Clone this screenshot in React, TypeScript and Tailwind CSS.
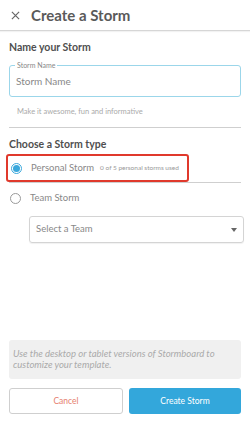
const Radio = ({ checked }: { checked?: boolean }) =>
  checked ? (
    <span className="flex h-[11px] w-[11px] shrink-0 items-center justify-center rounded-full border border-[#3aa8dc]">
      <span className="block h-[7px] w-[7px] rounded-full bg-[#3aa8dc]" />
    </span>
  ) : (
    <span className="block h-[11px] w-[11px] shrink-0 rounded-full border border-[#9a9a9a]" />
  );

const App = () => {
  return (
    <div className="flex h-[431px] w-[250px] flex-col bg-white font-['Lato',sans-serif] text-[#555]">
      {/* header */}
      <div className="flex h-[31px] shrink-0 items-center border-b border-[#d6d6d6] shadow-[0_1px_1px_rgba(0,0,0,0.05)]">
        <svg className="ml-[11px] h-[9px] w-[9px]" viewBox="0 0 10 10" fill="none" stroke="#666" strokeWidth="1.3">
          <path d="M1 1l8 8M9 1l-8 8" />
        </svg>
        <span className="ml-[11px] text-[15px] font-bold text-[#5a5a5a]">Create a Storm</span>
      </div>

      <div className="flex flex-1 flex-col px-[9px]">
        <p className="mt-[10px] text-[10.5px] font-bold leading-[12px] text-[#4f4f4f]">Name your Storm</p>

        {/* input */}
        <div className="relative mt-[12px] h-[32px] rounded-[3px] border border-[#9bd6ea]">
          <span className="absolute -top-[5px] left-[5px] bg-white px-[2px] text-[7px] leading-[8px] text-[#888]">Storm Name</span>
          <span className="absolute left-[6px] top-[9px] text-[10px] leading-[12px] text-[#888]">Storm Name</span>
        </div>
        <p className="ml-[8px] mt-[10px] text-[7.5px] leading-[9px] text-[#aaa]">Make it awesome, fun and informative</p>
        <div className="mt-[11px] border-t border-[#cfcfcf]" />

        <p className="mt-[10px] text-[10.5px] font-bold leading-[12px] text-[#4f4f4f]">Choose a Storm type</p>

        {/* personal storm */}
        <div className="mt-[4px] flex h-[28px] w-[183px] -ml-[3px] items-center rounded-[3px] border-2 border-[#e0392c]">
          <span className="ml-[3px]"><Radio checked /></span>
          <span className="ml-[9px] text-[9.5px] text-[#888]">Personal Storm</span>
          <span className="ml-[6px] text-[6.5px] text-[#999]">0 of 5 personal storms used</span>
        </div>
        <div className="border-t border-[#cfcfcf]" />

        {/* team storm */}
        <div className="mt-[10px] flex h-[11px] items-center">
          <span className="ml-[1px]"><Radio /></span>
          <span className="ml-[9px] text-[9.5px] text-[#888]">Team Storm</span>
        </div>
        <div className="ml-[20px] mr-[-3px] mt-[12px] flex h-[27px] items-center justify-between rounded-[3px] border border-[#d4d4d4] px-[6px] shadow-[0_1px_1px_rgba(0,0,0,0.06)]">
          <span className="text-[9.5px] text-[#888]">Select a Team</span>
          <svg className="h-[4px] w-[6px]" viewBox="0 0 6 4" fill="#666">
            <path d="M0 0h6L3 4z" />
          </svg>
        </div>

        <div className="flex-1" />

        {/* info */}
        <div className="rounded-[3px] bg-[#f0f0f0] px-[4px] py-[9px]">
          <p className="text-[9.5px] italic leading-[10.5px] text-[#aaa]">
            Use the desktop or tablet versions of Stormboard to customize your template.
          </p>
        </div>

        {/* buttons */}
        <div className="mb-[17px] mt-[9px] flex gap-[6px]">
          <button className="h-[26px] flex-1 rounded-[3px] border border-[#cfcfcf] bg-white text-[8.5px] text-[#e6806f]">
            Cancel
          </button>
          <button className="h-[26px] flex-1 rounded-[3px] bg-[#33a7db] text-[8.5px] text-white">
            Create Storm
          </button>
        </div>
      </div>
    </div>
  );
};

export default App;
